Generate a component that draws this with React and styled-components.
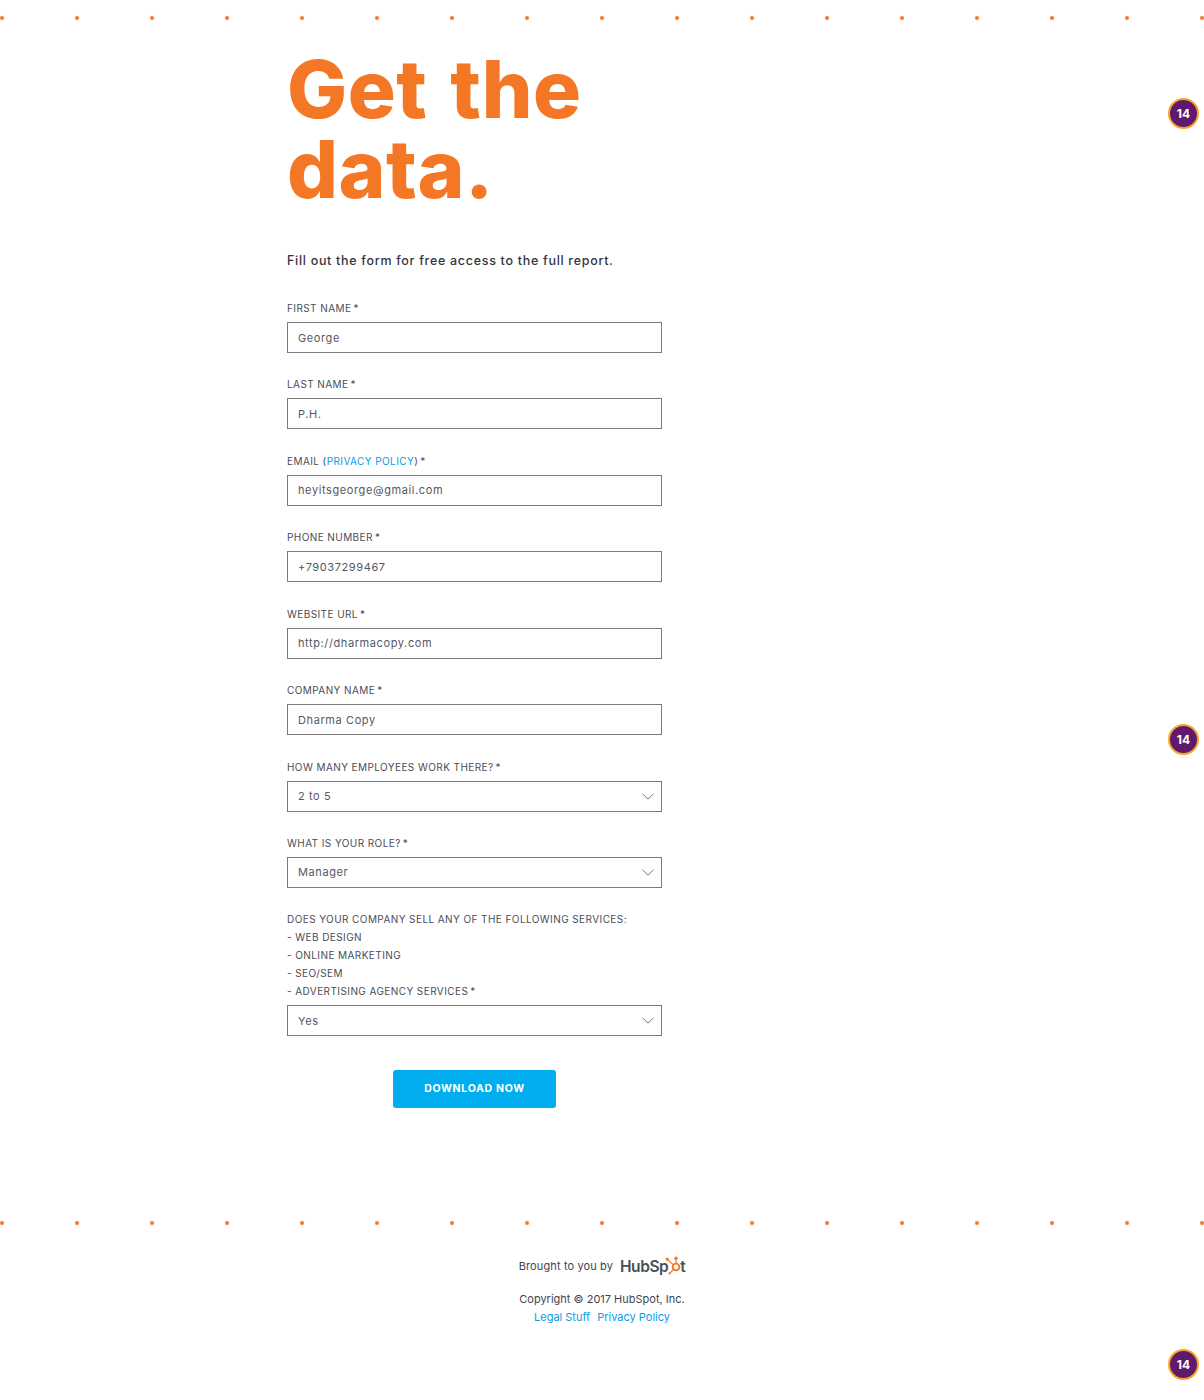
import React from "react";
import styled, { createGlobalStyle } from "styled-components";

const Global = createGlobalStyle`
  html, body { margin: 0; padding: 0; background: #fff; }
  body { font-family: "Inter", "Liberation Sans", sans-serif; }
  * { box-sizing: border-box; }
`;

const Page = styled.div`
  position: relative;
  width: 1204px;
  height: 1400px;
  overflow: hidden;
`;

const Dots = styled.div`
  height: 36px;
  background-image: radial-gradient(circle at 2px 18px, #f47725 0, #f47725 1.3px, transparent 2.7px);
  background-size: 75px 36px;
  background-repeat: repeat-x;
`;

const Main = styled.main`
  margin-left: 287px;
  width: 375px;
  height: 1169px;
  padding-top: 13px;
`;

const Title = styled.h1`
  margin: 0;
  width: 340px;
  font-size: 80px;
  line-height: 80px;
  font-weight: 800;
  letter-spacing: 0.5px;
  word-spacing: 5px;
  color: #f47725;
`;

const Lead = styled.p`
  margin: 42px 0 0;
  font-size: 12.5px;
  line-height: 20px;
  font-weight: 500;
  letter-spacing: 0.7px;
  color: #33353f;
`;

const Form = styled.form`
  margin-top: 28px;
  display: flex;
  flex-direction: column;
  gap: 22.43px;
`;

const Field = styled.div`
  display: flex;
  flex-direction: column;
  gap: 5px;
`;

const Label = styled.label`
  display: block;
  font-size: 10px;
  line-height: 18px;
  letter-spacing: 0.42px;
  color: #4a4d57;
`;

const LabelLine = styled.span`
  display: block;
`;

const Required = styled.span`
  margin-left: 2px;
`;

const Link = styled.a`
  color: #0a9be3;
  text-decoration: none;
`;

const InputBox = styled.div`
  height: 31px;
  border: 1px solid #7b7b7b;
  padding: 0 7px 0 10px;
  display: flex;
  align-items: center;
  justify-content: space-between;
  font-size: 11px;
  letter-spacing: 0.6px;
  color: #555862;
`;

const Chevron = styled.svg`
  width: 12px;
  height: 7px;
  fill: none;
  stroke: #767676;
  stroke-width: 1;
`;

const Button = styled.button`
  display: block;
  margin: 11.5px auto 0;
  width: 163px;
  height: 38px;
  border: 0;
  padding: 0 0 2px;
  border-radius: 3px;
  background: #00aeef;
  color: #fff;
  font-family: "Inter", "Liberation Sans", sans-serif;
  font-size: 10.5px;
  font-weight: 700;
  letter-spacing: 0.7px;
`;

const Footer = styled.footer`
  display: flex;
  flex-direction: column;
  align-items: center;
  font-size: 11px;
  color: #42454f;
`;

const Brought = styled.div`
  margin-top: 12px;
  height: 26px;
  display: flex;
  align-items: center;
  gap: 7px;
  letter-spacing: 0.12px;
`;

const Copy = styled.div`
  margin-top: 11px;
  line-height: 18px;
`;

const Links = styled.div`
  line-height: 18px;
  display: flex;
  gap: 7px;
`;

const Badge = styled.div`
  position: absolute;
  left: 1168px;
  top: ${(p) => p.$top}px;
  width: 31px;
  height: 31px;
  border-radius: 50%;
  background: #5f1a6e;
  border: 2px solid #f5a623;
  color: #fff;
  font-size: 12px;
  font-weight: 700;
  display: flex;
  align-items: center;
  justify-content: center;
`;

const LogoText = styled.span`
  font-size: 15.5px;
  font-weight: 600;
  letter-spacing: -0.45px;
  color: #454f58;
  display: inline-flex;
  align-items: center;
`;

const Sprocket = styled.svg`
  width: 16px;
  height: 19px;
  margin: -2px -1px 0 -3px;
`;

const Logo = () => (
  <LogoText>
    HubSp
    <Sprocket viewBox="0 0 16 19">
      <circle cx="11" cy="11" r="3.4" fill="none" stroke="#f47725" strokeWidth="1.9" />
      <path d="M11 7V3M8.3 8.6 2.6 3.8M8.4 13.6 5 17" stroke="#f47725" strokeWidth="1.2" fill="none" />
      <circle cx="11" cy="2.2" r="1.7" fill="#f47725" />
      <circle cx="2.2" cy="3.2" r="1.6" fill="#f47725" />
      <circle cx="4.6" cy="17.4" r="1.1" fill="#f47725" />
    </Sprocket>
    t
  </LogoText>
);

const Select = ({ value }) => (
  <InputBox>
    {value}
    <Chevron viewBox="0 0 12 7">
      <path d="M.5.8 6 6.2 11.5.8" />
    </Chevron>
  </InputBox>
);

const FieldLabel = ({ lines }) => (
  <Label>
    {lines.map((line, i) => (
      <LabelLine key={i}>
        {line}
        {i === lines.length - 1 && <Required>*</Required>}
      </LabelLine>
    ))}
  </Label>
);

const fields = [
  ["FIRST NAME", "George"],
  ["LAST NAME", "P.H."],
  [<>EMAIL (<Link href="#">PRIVACY POLICY</Link>)</>, "heyitsgeorge@gmail.com"],
  ["PHONE NUMBER", "+79037299467"],
  ["WEBSITE URL", "http://dharmacopy.com"],
  ["COMPANY NAME", "Dharma Copy"],
];

const selects = [
  [["HOW MANY EMPLOYEES WORK THERE?"], "2 to 5"],
  [["WHAT IS YOUR ROLE?"], "Manager"],
  [["DOES YOUR COMPANY SELL ANY OF THE FOLLOWING SERVICES:", "- WEB DESIGN", "- ONLINE MARKETING", "- SEO/SEM", "- ADVERTISING AGENCY SERVICES"], "Yes"],
];

export default function App() {
  return (
    <Page>
      <Global />
      <Dots />
      <Main>
        <Title>Get the data.</Title>
        <Lead>Fill out the form for free access to the full report.</Lead>
        <Form>
          {fields.map(([label, value], i) => (
            <Field key={i}>
              <FieldLabel lines={[label]} />
              <InputBox>{value}</InputBox>
            </Field>
          ))}
          {selects.map(([lines, value], i) => (
            <Field key={i}>
              <FieldLabel lines={lines} />
              <Select value={value} />
            </Field>
          ))}
          <Button type="button">DOWNLOAD NOW</Button>
        </Form>
      </Main>
      <Dots />
      <Footer>
        <Brought>Brought to you by <Logo /></Brought>
        <Copy>Copyright © 2017 HubSpot, Inc.</Copy>
        <Links><Link href="#">Legal Stuff</Link><Link href="#">Privacy Policy</Link></Links>
      </Footer>
      <Badge $top={98}>14</Badge>
      <Badge $top={724}>14</Badge>
      <Badge $top={1349}>14</Badge>
    </Page>
  );
}
